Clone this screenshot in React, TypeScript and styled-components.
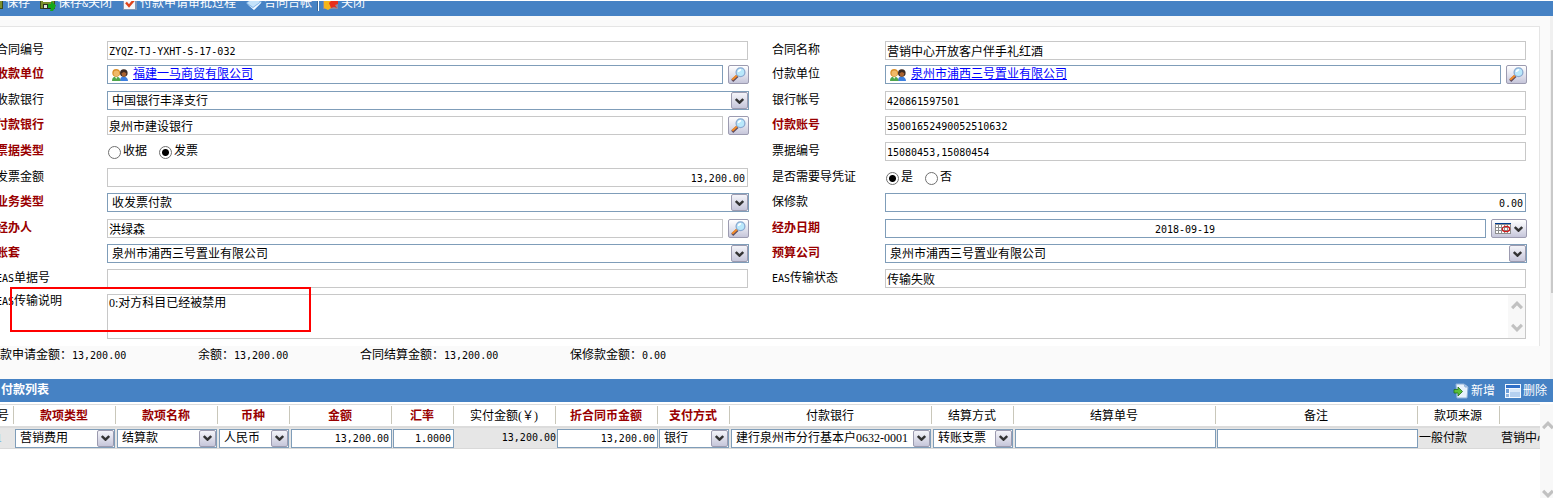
import React from "react";
import styled, { createGlobalStyle, css } from "styled-components";

const cjk = '"Liberation Serif", "Noto Sans CJK SC", serif';
const mono = '"DejaVu Sans Mono", "Noto Sans CJK SC", monospace';
const blue = "#4682c4";
const edge = "#7f9db9";

const GlobalStyle = createGlobalStyle`
  *, *::before, *::after { box-sizing: border-box; }
  body { margin: 0; background: #fafafa; overflow: hidden; }
  body, button, input, select, textarea { font: 12px/16px ${cjk}; color: #000; }
`;

const Page = styled.div`
  min-height: 100vh;
  display: flex;
  flex-direction: column;
  overflow: hidden;
`;

const Toolbar = styled.header`
  display: flex;
  align-items: flex-end;
  height: 16px;
  padding-bottom: 5px;
  border-top: 1px solid #fff;
  background: ${blue};
  overflow: hidden;
`;

const ToolButton = styled.button`
  display: flex;
  align-items: center;
  flex: none;
  gap: 2px;
  height: 16px;
  margin: 0 10px 0 0;
  padding: 0;
  border: 0;
  background: none;
  color: #fff;
  white-space: nowrap;
`;

const ToolGroup = styled.div`
  display: flex;
  margin-left: -12px;
`;

const ToolDivider = styled.span`
  flex: none;
  width: 2px;
  height: 16px;
  margin: 0 4px 0 -5px;
  border-left: 1px solid #3a6796;
  background: #fff;
`;

const Top = styled.div`
  display: flex;
`;

const Main = styled.main`
  flex: 1;
  min-width: 0;
  padding: 10px 10px 0 0;
`;

const PageRail = styled.div`
  width: 3px;
  padding: 34px 0 86px 1px;
  background: #f0f0f0;
  display: flex;
  &::before { content: ""; flex: 1; background: #c9c9c9; }
`;

const Panel = styled.form`
  position: relative;
  display: grid;
  grid-template-columns: 111px minmax(0, 1fr) 136px minmax(0, 1fr);
  grid-template-rows: 24px 26px 25px 26px 26px 25px 26px 25px 25px 25px auto;
  margin-left: -4px;
  padding: 14px 12px 7px 0;
  border: solid #e5e5e5;
  border-width: 1px 1px 0 0;
  background: #fff;
`;

const Label = styled.label<{ $required?: boolean; $second?: boolean; $memo?: boolean }>`
  padding-left: ${(p) => (p.$second ? 23 : 0)}px;
  line-height: ${(p) => (p.$memo ? 14 : 18)}px;
  white-space: nowrap;
  ${(p) => p.$required && css`color: #900; font-weight: 700;`}
`;

const Latin = styled.span`
  font-family: ${mono};
  font-size: 10px;
`;

const Cell = styled.div<{ $wide?: boolean }>`
  display: flex;
  align-items: flex-start;
  min-width: 0;
  ${(p) => p.$wide && css`grid-column: span 3; position: relative; padding-right: 1px;`}
`;

const TextBox = styled.input<{ $active?: boolean; $num?: boolean; $align?: string; $end?: boolean }>`
  flex: 1;
  min-width: 0;
  height: 19px;
  margin: 0 ${(p) => (p.$end ? 1 : 0)}px 0 0;
  padding: 1px 2px 0 1px;
  border: 1px solid ${(p) => (p.$active ? edge : "#c8c8c8")};
  border-radius: 0;
  background: #fff;
  text-align: ${(p) => p.$align || "left"};
  outline: none;
  ${(p) => p.$num && css`font-family: ${mono}; font-size: 10px;`}
`;

const LinkBox = styled.div`
  flex: 1;
  min-width: 0;
  height: 19px;
  display: flex;
  gap: 5px;
  padding-left: 4px;
  border: 1px solid ${edge};
  a { color: #00f; }
  svg { margin-top: 2px; }
`;

const IconButton = styled.button<{ $wide?: boolean }>`
  flex: none;
  display: flex;
  align-items: center;
  justify-content: center;
  gap: 3px;
  width: ${(p) => (p.$wide ? 36 : 21)}px;
  height: 19px;
  margin: 0 0 0 5px;
  padding: 0;
  border: 1px solid #9c9bb0;
  border-radius: 2px;
  background: linear-gradient(#fff, #e4e4ee 50%, #c6c6da);
`;

const SelectWrap = styled.div<{ $compact?: boolean }>`
  position: relative;
  display: flex;
  flex: 1;
  min-width: 0;
  margin-right: ${(p) => (p.$compact ? 1 : 0)}px;
`;

const Select = styled.select<{ $compact?: boolean }>`
  appearance: none;
  flex: 1;
  min-width: 0;
  height: 19px;
  padding: ${(p) => (p.$compact ? "0 0 2px 4px" : "1px 0 0 4px")};
  border: 1px solid ${edge};
  border-radius: 0;
  background: #fff;
  outline: none;
`;

const Arrow = styled.span`
  position: absolute;
  top: 1px;
  right: 1px;
  display: flex;
  align-items: center;
  justify-content: center;
  width: 17px;
  height: 17px;
  border: 1px solid #9c9bb0;
  border-radius: 2px;
  background: linear-gradient(#f4f4f9, #c6c6da);
  pointer-events: none;
`;

const Radios = styled.div`
  display: flex;
  gap: 12px;
  padding-left: 1px;
  line-height: 18px;
  label { display: flex; gap: 2px; }
  input {
    appearance: none;
    width: 13px;
    height: 13px;
    margin: 4px 0 0;
    border: 1px solid #707070;
    border-radius: 50%;
    background: #fff;
  }
  input:checked { background: radial-gradient(circle, #000 3px, #fff 4px); }
`;

const Memo = styled.textarea`
  flex: 1;
  height: 45px;
  margin: 0;
  padding: 0 18px 0 1px;
  border: 1px solid #c8c8c8;
  border-radius: 0;
  resize: none;
  overflow: hidden;
  outline: none;
`;

const MemoScroll = styled.div`
  position: absolute;
  top: 1px;
  right: 2px;
  width: 17px;
  height: 43px;
  padding: 6px 0;
  display: flex;
  flex-direction: column;
  align-items: center;
  justify-content: space-between;
  background: #f8f8f8;
`;

const Callout = styled.div`
  position: absolute;
  left: 14px;
  bottom: 14px;
  width: 301px;
  height: 45px;
  border: 2px solid #f00;
  pointer-events: none;
`;

const Summary = styled.div`
  display: grid;
  grid-template-columns: 198px 162px 210px 1fr;
  height: 33px;
  line-height: 18px;
  white-space: nowrap;
`;

const ListBar = styled.div`
  display: flex;
  justify-content: space-between;
  align-items: center;
  height: 23px;
  padding: 0 6px 0 1px;
  background: ${blue};
  color: #fff;
`;

const ListTitle = styled.h2`
  margin: 0 0 2px;
  font-size: 12px;
  line-height: 16px;
`;

const ListActions = styled.div`
  display: flex;
  margin-right: -10px;
`;

const ListArea = styled.section`
  flex: 1;
  display: flex;
  padding-top: 2px;
  background: #fff;
`;

const TableClip = styled.div`
  flex: 1;
  min-width: 0;
  overflow: hidden;
`;

const ListRail = styled.div`
  width: 13px;
  height: 94px;
  padding: 17px 0 0 2px;
  display: flex;
  flex-direction: column;
  justify-content: space-between;
  background: #f8f8f8;
  overflow: hidden;
  svg { flex: none; }
`;

const Table = styled.table`
  width: 100%;
  table-layout: fixed;
  border-collapse: separate;
  border-spacing: 0;
`;

const Th = styled.th<{ $required?: boolean }>`
  height: 24px;
  padding: 0 2px 0 0;
  border-top: 1px solid #dcdcdc;
  border-bottom: 2px solid #dcdcdc;
  color: ${(p) => (p.$required ? "#900" : "#000")};
  font-weight: ${(p) => (p.$required ? 700 : 400)};
  white-space: nowrap;
  overflow: hidden;
  background: linear-gradient(#c9c7ba, #c9c7ba) right 0 top 1px / 1px 18px no-repeat;
  &:first-child { text-indent: -3px; text-align: left; }
  &:last-child { background: none; }
`;

const Td = styled.td<{ $num?: boolean }>`
  height: 21px;
  padding: 0 0 0 1px;
  border-bottom: 1px solid #d9d9d9;
  background: #e6e6e6;
  white-space: nowrap;
  overflow: hidden;
  ${(p) => p.$num && css`font-family: ${mono}; font-size: 10px; text-align: right;`}
  &:first-child { color: #2a8ad8; text-indent: -5px; }
`;

const TdFlex = styled.div`
  display: flex;
`;

const Chevron = ({ color = "#333", w = 9, h = 6, up = false }: { color?: string; w?: number; h?: number; up?: boolean }) => (
  <svg width={w} height={h} viewBox="0 0 9 6" fill="none" stroke={color} strokeWidth="2.4" aria-hidden="true">
    <path d={up ? "M.8 5 4.5 1.3 8.2 5" : "M.8 1 4.5 4.7 8.2 1"} />
  </svg>
);

const People = () => (
  <svg width="16" height="14" viewBox="0 0 16 14" aria-hidden="true">
    <path d="M8 13c0-3 1-4.500 3.500-4.500S16 10 16 13z" fill="#3d7fe0" />
    <circle cx="11.800" cy="5" r="3.800" fill="#3b2a22" />
    <path d="M9.500 5c1.500 0 2-.8 2.500-1.200.5.800 1.300 1 2.300 1.200 0 2.500-1 3.600-2.400 3.600S9.500 7.500 9.500 5z" fill="#a9622f" />
    <path d="M0 13c0-3 1.300-4.500 4-4.500S8.500 10 8.500 13z" fill="#4fa64a" />
    <path d="M3 9l1.200 2L5.500 9z" fill="#e8f5e0" />
    <circle cx="4.200" cy="4.800" r="3.900" fill="#d98f2b" />
    <circle cx="4.400" cy="5.400" r="2.800" fill="#f0b968" />
  </svg>
);

const Glass = () => (
  <svg width="15" height="15" viewBox="0 0 15 15" aria-hidden="true">
    <path d="M1.200 13.800 6.500 8.800" stroke="#5a4a60" strokeWidth="3" />
    <path d="M1.200 12.800 6.200 8.200" stroke="#f08a2a" strokeWidth="2.200" />
    <circle cx="9.500" cy="5.200" r="4.400" fill="#b9e8fb" stroke="#8aa9d0" strokeWidth="1.300" />
    <path d="M7.500 5c.2-1.500 1.200-2.300 2.600-2.300" stroke="#fff" strokeWidth="1.600" fill="none" />
  </svg>
);

const Calendar = () => (
  <svg width="16" height="11" viewBox="0 0 16 11" aria-hidden="true">
    <path d="M0 0h16v11H0z" fill="#8e8e8e" />
    <path d="M0 0h16v1H0z" fill="#003c8f" />
    <path d="M1 2h2v2H1zM4 2h2v2H4zM7 2h2v2H7zM10 2h2v2h-2zM13 2h2v2h-2zM1 5h2v2H1zM4 5h2v2H4zM7 5h2v2H7zM10 5h2v2h-2zM13 5h2v2h-2zM1 8h2v2H1zM4 8h2v2H4zM7 8h2v2H7zM10 8h2v2h-2zM13 8h2v2h-2z" fill="#fff" />
    <ellipse cx="11" cy="6" rx="3.600" ry="2.600" fill="none" stroke="#d01818" strokeWidth="1.300" />
  </svg>
);

const Disk = ({ arrow = false }: { arrow?: boolean }) => (
  <svg width="16" height="16" viewBox="0 0 16 16" aria-hidden="true">
    <path d="M0 1h15v13H0z" fill="#3b4a1c" />
    <path d="M1 1h13v12H1z" fill="#7c8f2c" />
    <path d="M3 1h9v6H3z" fill="#fff" />
    <path d="M3 9h8v5H3z" fill="#2a2f22" />
    <path d="M4 10h3v3H4z" fill="#dfe5dc" />
    {arrow && <path d="M8 9h3V6l5 4.500-3 5.500h-3l1-3H8z" fill="#17a81a" />}
  </svg>
);

const CheckDoc = () => (
  <svg width="16" height="16" viewBox="0 0 16 16" aria-hidden="true">
    <path d="M1 1h14v14H1z" fill="#8097b5" />
    <path d="M2 1h11v13H2z" fill="#f4f6fa" />
    <path d="M4 7.500 7 11l5-6" fill="none" stroke="#e0441c" strokeWidth="2.400" />
  </svg>
);

const Book = () => (
  <svg width="16" height="16" viewBox="0 0 16 16" aria-hidden="true">
    <path d="M0 8 9 1l7 6-8 8z" fill="#7fb3e6" />
    <path d="M1 8 9 2l5 5-7 5z" fill="#c4e2fa" />
    <path d="M1 9l6 4 8-6v1l-7 7z" fill="#f2f8ff" />
  </svg>
);

const Door = () => (
  <svg width="16" height="16" viewBox="0 0 16 16" aria-hidden="true">
    <path d="M0 1h15v13H0z" fill="#8d8aa0" />
    <path d="M1 1h5l2 2v10l-3 2-4-2z" fill="#f5b51c" />
    <path d="M6 8l4-4v2h5v3l-3 1 2 3-3-1-3 1z" fill="#e8301c" />
  </svg>
);

const AddDoc = () => (
  <svg width="16" height="16" viewBox="0 0 16 16" aria-hidden="true">
    <path d="M3 1h8l4 3-1 11H4z" fill="#e8f2fc" stroke="#8fb0d8" />
    <path d="M11 1l1 3h3" fill="#a8c4e4" stroke="#8fb0d8" />
    <path d="M1 6.500h4V4l4.500 4.500L5 13v-3H1z" fill="#5cc038" stroke="#1f6f1c" strokeWidth=".8" />
  </svg>
);

const WindowIcon = () => (
  <svg width="16" height="16" viewBox="0 0 16 16" aria-hidden="true">
    <path d="M0 1h16v14H0z" fill="#f2f8ff" />
    <path d="M1 2h14v3H1z" fill="#2f6fc8" />
    <path d="M1 6h3v4H1z" fill="#6f9fd8" />
    <path d="M1 11h3v3H1z" fill="#8fb4e0" />
    <path d="M5 6h10v8H5z" fill="#b4d0f0" />
    <path d="M5 6h10v3H5z" fill="#d8e8fa" />
  </svg>
);

type FieldKind = "text" | "select" | "lookup" | "link" | "radio" | "date";
interface FieldDef {
  id: string;
  label: string;
  prefix?: string;
  kind: FieldKind;
  value?: string;
  required?: boolean;
  num?: boolean;
  align?: string;
  active?: boolean;
  options?: string[];
}

const fields: FieldDef[] = [
  { id: "contractNo", label: "合同编号", kind: "text", value: "ZYQZ-TJ-YXHT-S-17-032", num: true },
  { id: "contractName", label: "合同名称", kind: "text", value: "营销中心开放客户伴手礼红酒" },
  { id: "payee", label: "收款单位", kind: "link", value: "福建一马商贸有限公司", required: true },
  { id: "payer", label: "付款单位", kind: "link", value: "泉州市浦西三号置业有限公司" },
  { id: "payeeBank", label: "收款银行", kind: "select", value: "中国银行丰泽支行" },
  { id: "bankAccount", label: "银行帐号", kind: "text", value: "420861597501", num: true },
  { id: "payerBank", label: "付款银行", kind: "lookup", value: "泉州市建设银行", required: true },
  { id: "payerAccount", label: "付款账号", kind: "text", value: "35001652490052510632", required: true, num: true },
  { id: "billType", label: "票据类型", kind: "radio", options: ["收据", "发票"], value: "发票", required: true },
  { id: "billNo", label: "票据编号", kind: "text", value: "15080453,15080454", num: true },
  { id: "invoiceAmount", label: "发票金额", kind: "text", value: "13,200.00", num: true, align: "right" },
  { id: "voucher", label: "是否需要导凭证", kind: "radio", options: ["是", "否"], value: "是" },
  { id: "bizType", label: "业务类型", kind: "select", value: "收发票付款", required: true },
  { id: "retention", label: "保修款", kind: "text", value: "0.00", num: true, align: "right", active: true },
  { id: "handler", label: "经办人", kind: "lookup", value: "洪绿森", required: true },
  { id: "handleDate", label: "经办日期", kind: "date", value: "2018-09-19", required: true },
  { id: "ledger", label: "账套", kind: "select", value: "泉州市浦西三号置业有限公司", required: true },
  { id: "budgetCompany", label: "预算公司", kind: "select", value: "泉州市浦西三号置业有限公司", required: true },
  { id: "easNo", prefix: "EAS", label: "单据号", kind: "text", value: "" },
  { id: "easStatus", prefix: "EAS", label: "传输状态", kind: "text", value: "传输失败" },
];

const Dropdown = ({ id, value, label, compact }: { id?: string; value: string; label?: string; compact?: boolean }) => (
  <SelectWrap $compact={compact}>
    <Select id={id} aria-label={label} $compact={compact} defaultValue={value}>
      <option>{value}</option>
    </Select>
    <Arrow><Chevron /></Arrow>
  </SelectWrap>
);

const Control = ({ f }: { f: FieldDef }) => {
  switch (f.kind) {
    case "select":
      return <Dropdown id={f.id} value={f.value!} />;
    case "link":
      return (
        <>
          <LinkBox><People /><a id={f.id} href="#unit">{f.value}</a></LinkBox>
          <IconButton type="button" aria-label={`查找${f.label}`}><Glass /></IconButton>
        </>
      );
    case "lookup":
      return (
        <>
          <TextBox id={f.id} defaultValue={f.value} />
          <IconButton type="button" aria-label={`查找${f.label}`}><Glass /></IconButton>
        </>
      );
    case "date":
      return (
        <>
          <TextBox id={f.id} defaultValue={f.value} $active $num $align="center" />
          <IconButton type="button" $wide aria-label="选择日期"><Calendar /><Chevron /></IconButton>
        </>
      );
    case "radio":
      return (
        <Radios role="radiogroup" aria-label={f.label}>
          {f.options!.map((o) => (
            <label key={o}>
              <input type="radio" name={f.id} defaultChecked={o === f.value} />
              {o}
            </label>
          ))}
        </Radios>
      );
    default:
      return <TextBox id={f.id} defaultValue={f.value} $end $num={f.num} $align={f.align} $active={f.active} />;
  }
};

interface Column {
  title: string;
  width?: number;
  required?: boolean;
  kind: "plain" | "select" | "input";
  value: string;
  num?: boolean;
}

const columns: Column[] = [
  { title: "号", width: 14, kind: "plain", value: "1" },
  { title: "款项类型", width: 102, required: true, kind: "select", value: "营销费用" },
  { title: "款项名称", width: 102, required: true, kind: "select", value: "结算款" },
  { title: "币种", width: 72, required: true, kind: "select", value: "人民币" },
  { title: "金额", width: 102, required: true, kind: "input", value: "13,200.00" },
  { title: "汇率", width: 62, required: true, kind: "input", value: "1.0000" },
  { title: "实付金额(￥)", width: 102, kind: "plain", value: "13,200.00", num: true },
  { title: "折合同币金额", width: 102, required: true, kind: "input", value: "13,200.00" },
  { title: "支付方式", width: 72, required: true, kind: "select", value: "银行" },
  { title: "付款银行", width: 202, kind: "select", value: "建行泉州市分行基本户0632-0001" },
  { title: "结算方式", width: 82, kind: "select", value: "转账支票" },
  { title: "结算单号", width: 202, kind: "input", value: "" },
  { title: "备注", width: 202, kind: "input", value: "" },
  { title: "款项来源", width: 82, kind: "plain", value: "一般付款" },
  { title: "", kind: "plain", value: "营销中心" },
];

const totals = [
  ["款申请金额：", "13,200.00"],
  ["余额：", "13,200.00"],
  ["合同结算金额：", "13,200.00"],
  ["保修款金额：", "0.00"],
];

export default function App() {
  return (
    <Page>
      <GlobalStyle />
      <Toolbar>
        <ToolGroup>
          <ToolButton><Disk />保存</ToolButton>
          <ToolButton><Disk arrow /><span>保存<Latin>&amp;</Latin>关闭</span></ToolButton>
          <ToolButton><CheckDoc />付款申请审批过程</ToolButton>
          <ToolButton><Book />合同台帐</ToolButton>
          <ToolDivider />
          <ToolButton><Door />关闭</ToolButton>
        </ToolGroup>
      </Toolbar>

      <Top>
        <Main>
          <Panel>
            {fields.map((f, i) => (
              <React.Fragment key={f.id}>
                <Label
                  as={f.kind === "radio" ? "span" : undefined}
                  htmlFor={f.kind === "radio" ? undefined : f.id}
                  $required={f.required}
                  $second={i % 2 === 1}
                >
                  {f.prefix && <Latin>{f.prefix}</Latin>}{f.label}
                </Label>
                <Cell><Control f={f} /></Cell>
              </React.Fragment>
            ))}
            <Label htmlFor="easMemo" $memo><Latin>EAS</Latin>传输说明</Label>
            <Cell $wide>
              <Memo id="easMemo" defaultValue="0:对方科目已经被禁用" />
              <MemoScroll>
                <Chevron up color="#c1c1c1" w={12} h={9} />
                <Chevron color="#c1c1c1" w={12} h={9} />
              </MemoScroll>
            </Cell>
            <Callout />
          </Panel>
          <Summary>
            {totals.map(([name, amount]) => (
              <span key={name}>{name}<Latin>{amount}</Latin></span>
            ))}
          </Summary>
        </Main>
        <PageRail />
      </Top>

      <ListBar>
        <ListTitle>付款列表</ListTitle>
        <ListActions>
          <ToolButton><AddDoc />新增</ToolButton>
          <ToolButton><WindowIcon />删除</ToolButton>
        </ListActions>
      </ListBar>
      <ListArea>
        <TableClip>
          <Table>
            <colgroup>
              {columns.map((c, i) => <col key={i} width={c.width} />)}
            </colgroup>
            <thead>
              <tr>
                {columns.map((c, i) => <Th key={i} $required={c.required}>{c.title}</Th>)}
              </tr>
            </thead>
            <tbody>
              <tr>
                {columns.map((c, i) => (
                  <Td key={i} $num={c.num}>
                    {c.kind === "plain" && c.value}
                    {c.kind === "select" && <TdFlex><Dropdown compact label={c.title} value={c.value} /></TdFlex>}
                    {c.kind === "input" && (
                      <TdFlex><TextBox aria-label={c.title} defaultValue={c.value} $active $num $align="right" /></TdFlex>
                    )}
                  </Td>
                ))}
              </tr>
            </tbody>
          </Table>
        </TableClip>
        <ListRail>
          <Chevron up color="#c1c1c1" w={12} h={9} />
          <Chevron color="#c1c1c1" w={12} h={9} />
        </ListRail>
      </ListArea>
    </Page>
  );
}
